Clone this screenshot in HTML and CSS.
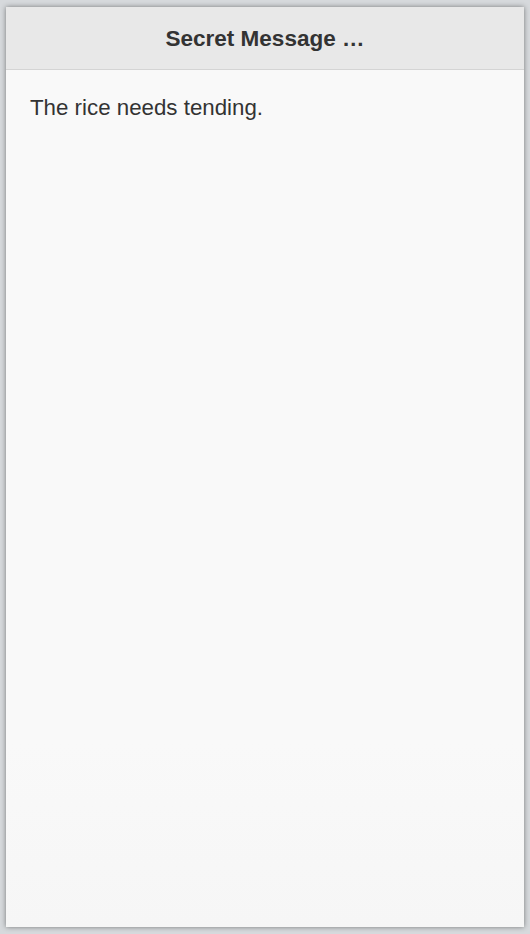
FILE: index.html
```html
<!DOCTYPE html>
<html lang="en">

<head>
	<meta charset="UTF-8">
	<meta name="viewport" content="width=device-width, initial-scale=1.0">
	<title>Secret Message</title>
	<link rel="stylesheet" href="styles.css">
</head>

<body>
	<div class="window">
		<header class="bar">
			<h1>Secret Message …</h1>
		</header>
		<main class="content">
			<p>The rice needs tending.</p>
		</main>
	</div>
</body>

</html>
```

FILE: styles.css
```css
* {
	box-sizing: border-box;
}

html,
body {
	height: 100%;
}

body {
	margin: 0;
	padding: 7px 6px 7px 6px;
	background: #d6d9dc;
	font-family: "Liberation Sans", Arial, sans-serif;
	color: #333;
}

.window {
	display: flex;
	flex-direction: column;
	height: 100%;
	background: linear-gradient(#f9f9f9 80%, #f6f6f6);
	box-shadow: 0 0 5px rgba(0, 0, 0, 0.45);
}

.bar {
	height: 63px;
	padding-top: 2px;
	display: flex;
	align-items: center;
	justify-content: center;
	background: #e8e8e8;
	border-bottom: 1px solid #d4d4d4;
}

.bar h1 {
	margin: 0;
	font-size: 22.5px;
	font-weight: 700;
}

.content {
	flex: 1;
	padding: 25px 24px;
}

.content p {
	margin: 0;
	font-size: 22.3px;
}
```
